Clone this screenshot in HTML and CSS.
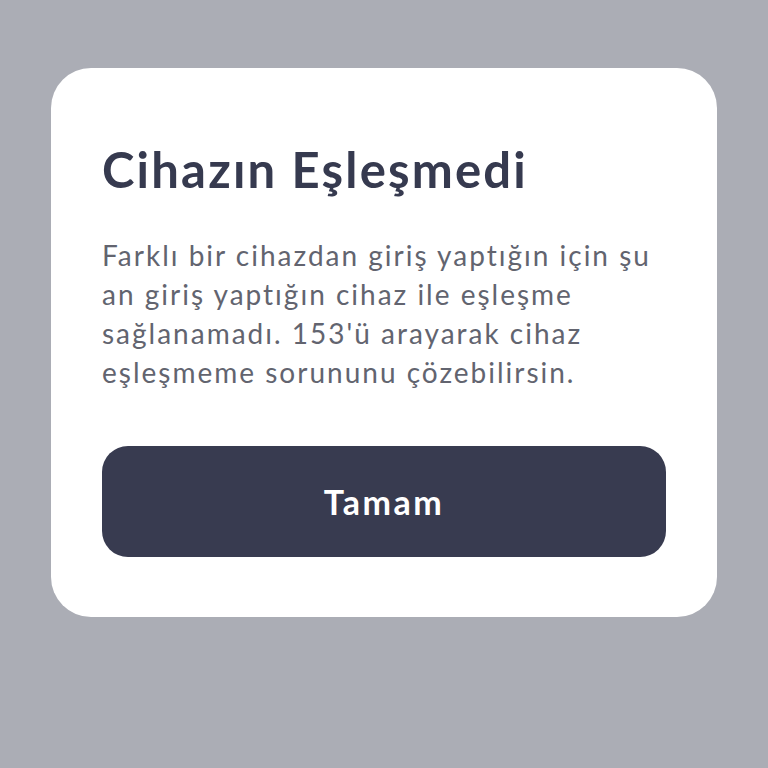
FILE: index.html
```html
<!DOCTYPE html>
<html lang="tr">
<head>
    <meta charset="UTF-8">
    <meta name="viewport" content="width=device-width, initial-scale=1.0">
    <title>Cihaz Eşleşmesi</title>
    <link rel="stylesheet" href="styles.css">
</head>
<body>
    <div class="overlay">
        <!-- uyarı kartı -->
        <div class="dialog">
            <h1 class="dialog_title">Cihazın Eşleşmedi</h1>
            <p class="dialog_text">
                Farklı bir cihazdan giriş yaptığın için şu<br>
                an giriş yaptığın cihaz ile eşleşme<br>
                sağlanamadı. 153'ü arayarak cihaz<br>
                eşleşmeme sorununu çözebilirsin.
            </p>
            <a href="javascript:;" class="dialog_button">Tamam</a>
        </div>
    </div>
</body>
</html>
```

FILE: styles.css
```css
* {
    padding: 0;
    margin: 0;
    box-sizing: border-box;
}
body {
    background-color: #abadb5;
    font-family: Lato, "Noto Sans", sans-serif;
}
.overlay {
    width: 768px;
    height: 768px;
    padding-top: 68px;
    padding-left: 51px;
}
.dialog {
    width: 666px;
    height: 549px;
    background: #fff;
    border-radius: 40px;
    padding: 73px 51px 60px 51px;
    display: flex;
    flex-direction: column;
}
.dialog_title {
    font-size: 49px;
    line-height: 56px;
    font-weight: 700;
    letter-spacing: 2.2px;
    color: #363a4f;
}
.dialog_text {
    margin-top: 39px;
    font-size: 28px;
    line-height: 39px;
    letter-spacing: 2px;
    color: #62646f;
    white-space: nowrap;
}
.dialog_button {
    margin-top: auto;
    height: 111px;
    border-radius: 26px;
    background: #383b50;
    color: #fff;
    font-size: 34px;
    font-weight: 700;
    letter-spacing: 2.5px;
    text-decoration: none;
    display: flex;
    align-items: center;
    justify-content: center;
}
```
